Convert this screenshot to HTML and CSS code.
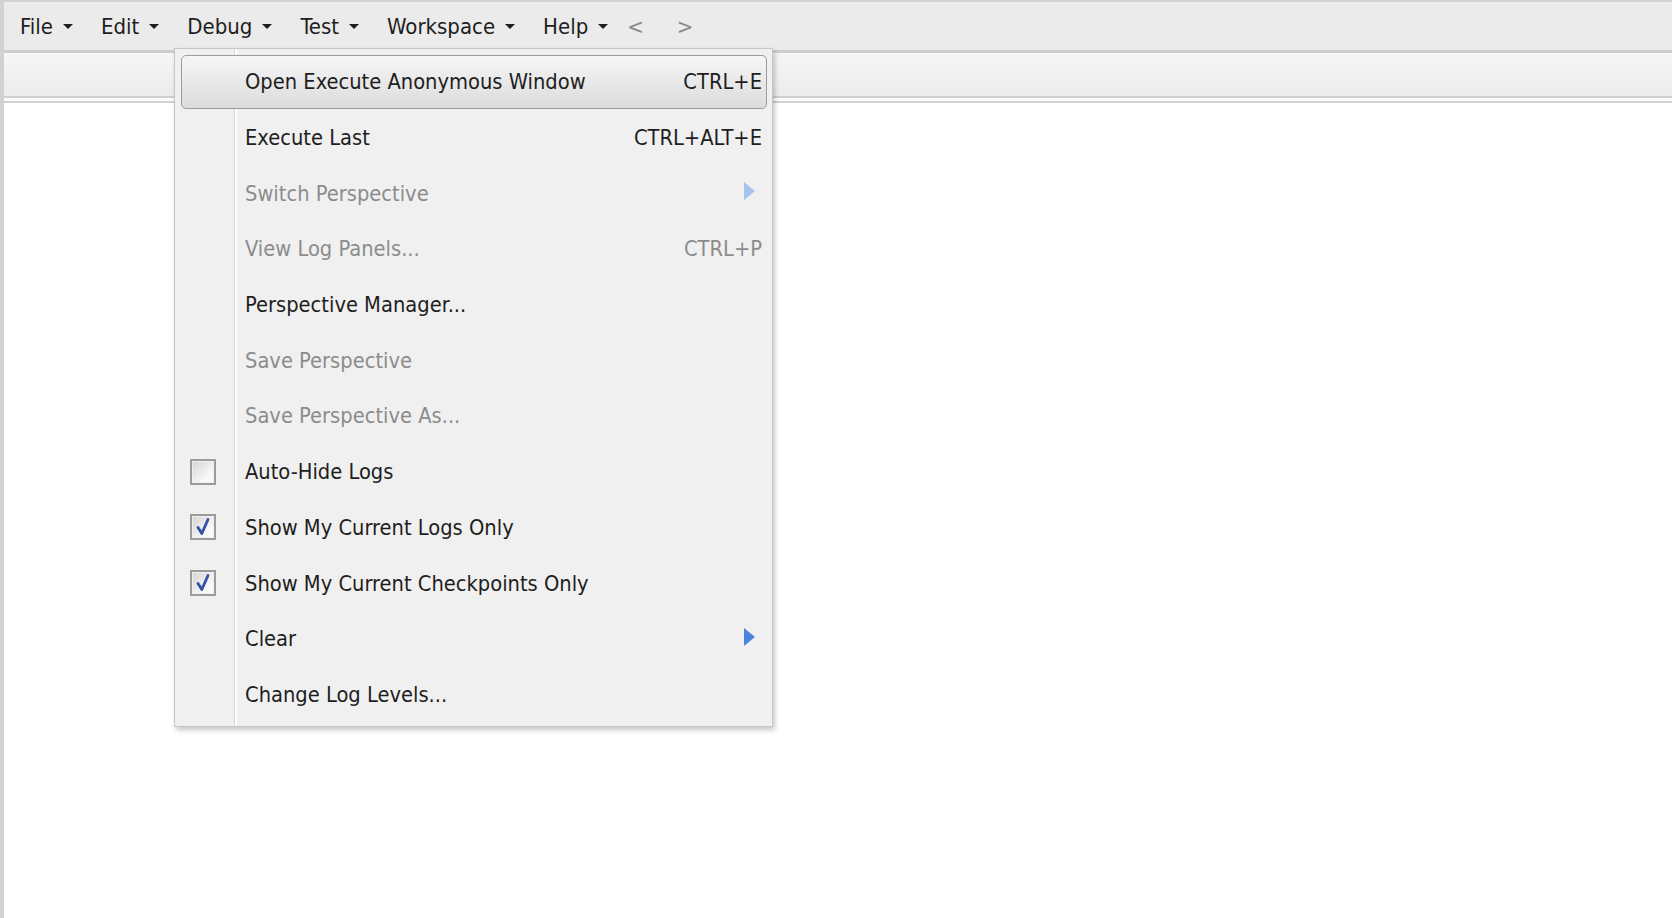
FILE: index.html
```html
<!DOCTYPE html>
<html>
<head>
<meta charset="utf-8">
<link rel="stylesheet" href="styles.css">
</head>
<body>
<div class="app">
  <div class="menubar">
    <div class="mb-item">File<span class="caret"></span></div>
    <div class="mb-item">Edit<span class="caret"></span></div>
    <div class="mb-item">Debug<span class="caret"></span></div>
    <div class="mb-item">Test<span class="caret"></span></div>
    <div class="mb-item">Workspace<span class="caret"></span></div>
    <div class="mb-item">Help<span class="caret"></span></div>
    <div class="mb-nav">&lt;</div>
    <div class="mb-nav">&gt;</div>
  </div>
  <div class="toolbar"></div>
  <div class="toolbar-gap"></div>
  <div class="content"></div>

  <div class="menu">
    <div class="mi active"><span class="ic"></span><span class="lbl">Open Execute Anonymous Window</span><span class="sc">CTRL+E</span></div>
    <div class="mi"><span class="ic"></span><span class="lbl">Execute Last</span><span class="sc">CTRL+ALT+E</span></div>
    <div class="mi disabled"><span class="ic"></span><span class="lbl">Switch Perspective</span><span class="sub"></span></div>
    <div class="mi disabled"><span class="ic"></span><span class="lbl">View Log Panels...</span><span class="sc">CTRL+P</span></div>
    <div class="mi"><span class="ic"></span><span class="lbl">Perspective Manager...</span></div>
    <div class="mi disabled"><span class="ic"></span><span class="lbl">Save Perspective</span></div>
    <div class="mi disabled"><span class="ic"></span><span class="lbl">Save Perspective As...</span></div>
    <div class="mi"><span class="ic"><span class="cb"></span></span><span class="lbl">Auto-Hide Logs</span></div>
    <div class="mi"><span class="ic"><span class="cb"><svg viewBox="0 0 20 20" width="20" height="20"><path d="M5 10.5 L8.8 16.5 L15 2.5" fill="none" stroke="#3351a8" stroke-width="2.8" stroke-linecap="round" stroke-linejoin="round"/></svg></span></span><span class="lbl">Show My Current Logs Only</span></div>
    <div class="mi"><span class="ic"><span class="cb"><svg viewBox="0 0 20 20" width="20" height="20"><path d="M5 10.5 L8.8 16.5 L15 2.5" fill="none" stroke="#3351a8" stroke-width="2.8" stroke-linecap="round" stroke-linejoin="round"/></svg></span></span><span class="lbl">Show My Current Checkpoints Only</span></div>
    <div class="mi"><span class="ic"></span><span class="lbl">Clear</span><span class="sub"></span></div>
    <div class="mi"><span class="ic"></span><span class="lbl">Change Log Levels...</span></div>
  </div>
</div>
</body>
</html>
```
FILE: styles.css
```css
html, body {
  margin: 0;
  padding: 0;
  height: 100%;
  background: #ffffff;
}

.app {
  position: relative;
  height: 100%;
  box-sizing: border-box;
  border-top: 2px solid #d2d2d2;
  border-left: 4px solid #d2d2d2;
  font-family: "DejaVu Sans Condensed", "DejaVu Sans", sans-serif;
  font-stretch: condensed;
  color: #1e1e1e;
  display: flex;
  flex-direction: column;
}

.menubar {
  height: 51px;
  flex: none;
  box-sizing: border-box;
  padding-top: 0;
  background: #ebebeb;
  border-bottom: 3px solid #cdcdcd;
  display: flex;
  align-items: center;
  padding-left: 16px;
  font-size: 22px;
}

.mb-item {
  display: flex;
  align-items: center;
  margin-right: 28px;
}

.caret {
  display: inline-block;
  width: 0;
  height: 0;
  margin-left: 10px;
  border-left: 5px solid transparent;
  border-right: 5px solid transparent;
  border-top: 5px solid #1e1e1e;
}

.mb-nav {
  color: #8a8a8a;
  margin-right: 31px;
  margin-left: -9px;
}

.mb-nav + .mb-nav {
  margin-left: 2px;
}

.toolbar {
  height: 43px;
  flex: none;
  background: linear-gradient(#f7f7f7, #ebebeb);
  border-bottom: 2px solid #cfcfcf;
}

.toolbar-gap {
  height: 3px;
  flex: none;
  background: #fdfdfd;
  border-bottom: 2px solid #d0d0d0;
}

.content {
  flex: 1;
  background: #ffffff;
}

.menu {
  position: absolute;
  left: 170px;
  top: 46px;
  width: 599px;
  height: 679px;
  box-sizing: border-box;
  padding-top: 5px;
  display: flex;
  flex-direction: column;
  background-color: #f0f0f0;
  background-image: linear-gradient(to right, transparent 59px, #d6d6d6 59px, #d6d6d6 60px, #ffffff 60px, #ffffff 62px, transparent 62px);
  border: 1px solid #c6c6c6;
  box-shadow: 2px 3px 5px rgba(0, 0, 0, 0.22);
  font-size: 21.7px;
}

.mi {
  height: 53.7px;
  flex: none;
  margin: 1px 5px 1px 6px;
  border: 1px solid transparent;
  box-sizing: border-box;
  display: flex;
  align-items: center;
  padding-right: 4px;
  border-radius: 5px;
}

.mi.active {
  border-color: #9c9c9c;
  background: linear-gradient(#f6f6f6, #dcdcdc);
}

.mi.disabled {
  color: #8c8c8c;
}

.ic {
  width: 26px;
  height: 26px;
  margin-left: 8px;
  margin-right: 29px;
  flex: none;
  display: flex;
}

.cb {
  width: 26px;
  height: 26px;
  box-sizing: border-box;
  border: 2px solid #9c9c9c;
  background: linear-gradient(135deg, #d4d4d4, #fafafa 75%);
  box-shadow: inset 0 0 0 1px #efefef;
  display: flex;
  align-items: center;
  justify-content: center;
}

.lbl {
  flex: 1;
  white-space: nowrap;
}

.sc {
  white-space: nowrap;
}

.sub {
  width: 0;
  height: 0;
  margin-right: 7px;
  border-top: 9px solid transparent;
  border-bottom: 9px solid transparent;
  border-left: 11px solid #4a84dc;
  margin-top: -4px;
}

.mi.disabled .sub {
  border-left-color: #a7c3ec;
}
```
